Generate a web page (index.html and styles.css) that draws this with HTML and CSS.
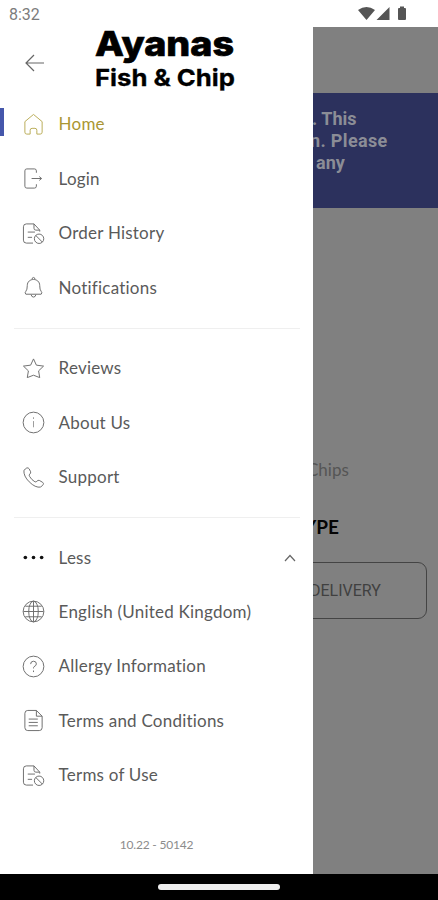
FILE: index.html
```html
<!DOCTYPE html>
<html lang="en">
<head>
<meta charset="utf-8">
<title>Ayanas Fish &amp; Chip</title>
<link rel="stylesheet" href="styles.css">
</head>
<body>
<svg width="0" height="0" class="defs">
  <symbol id="doc-ban" viewBox="0 0 24 24"><path d="M11.500 22H4.500Q1.500 22 1.500 19V5Q1.500 2 4.500 2H12.500L18.500 8.500V10M12.500 2V6.500Q12.500 8.500 14.500 8.500H18.500M6 10.500H13.500M6 16H10.500"/><circle cx="17.800" cy="17.500" r="4.900"/><path d="M14.300 14L21.300 21"/></symbol>
</svg>
<div class="phone">
  <header class="status">
    <span>8:32</span>
    <svg class="signals" width="50" height="16" viewBox="0 0 50 16"><path d="M0 4Q8.500-2 17 4L8.500 14ZM18.500 14L31.500 1V14ZM40 3Q40 2 41 2H42V.5H46V2H47Q48 2 48 3V13Q48 14 47 14H41Q40 14 40 13Z"/></svg>
  </header>
  <div class="stage">
    <aside class="drawer">
      <div class="brand">
        <svg class="back" width="20" height="18" viewBox="0 0 20 18"><path d="M9 1L1 9L9 17M1 9H19"/></svg>
        <svg class="logo" width="144" height="66" viewBox="0 0 144 66"><text class="logo-top" x="1" y="29" textLength="139" lengthAdjust="spacingAndGlyphs">Ayanas</text><text class="logo-sub" x="1" y="59" textLength="140" lengthAdjust="spacingAndGlyphs">Fish &amp; Chip</text></svg>
      </div>
      <nav>
        <ul class="group">
          <li class="row active"><svg class="icon" viewBox="0 0 24 24"><path d="M3 9L12 1.500L21 9V20Q21 22 19 22H15.500V18Q15.500 16 13.500 16H10.500Q8.500 16 8.500 18V22H5Q3 22 3 20Z"/></svg><span class="label">Home</span></li>
          <li class="row"><svg class="icon" viewBox="0 0 24 24"><path d="M15 6V4Q15 2 13 2H5Q3 2 3 4V20Q3 22 5 22H13Q15 22 15 20V18M10 12H20M18 10L20.500 12L18 14"/></svg><span class="label">Login</span></li>
          <li class="row"><svg class="icon"><use href="#doc-ban"/></svg><span class="label">Order History</span></li>
          <li class="row"><svg class="icon" viewBox="0 0 24 24"><path d="M10.500 3.500Q10.500 1.500 12 1.500T13.500 3.500M4 19Q2.500 17.500 4 16Q5.500 14.500 5.500 10C5.500 1.500 18.500 1.500 18.500 10Q18.500 14.500 20 16Q21.500 17.500 20 19ZM9.500 19.500Q10 22 12 22T14.500 19.500"/></svg><span class="label">Notifications</span></li>
        </ul>
        <ul class="group">
          <li class="row"><svg class="icon" viewBox="0 0 24 24"><path d="M12 2L15 8.500L22.500 9.500L17.300 14.500L18.500 21.500L12 19L5.500 21.500L6.700 14.500L1.500 9.500L9 8.500Z"/></svg><span class="label">Reviews</span></li>
          <li class="row"><svg class="icon" viewBox="0 0 24 24"><circle cx="12" cy="12" r="10.800"/><path class="faint" d="M12 10.500V17M12 6.500V8.300"/></svg><span class="label">About Us</span></li>
          <li class="row"><svg class="icon" viewBox="0 0 24 24"><path d="M2 4.500L5 2Q6.500 1.500 7.500 3L9 6Q9.500 7.500 8 8.500Q7 9.500 8 11Q10 14.500 13.500 16.500Q14.500 17 15.500 16Q16.500 14.500 18 15L21.500 17Q23 18 22 19.500L19.500 22Q14 23 7.500 16.500Q1.500 10.500 2 4.500Z"/></svg><span class="label">Support</span></li>
        </ul>
        <ul class="group">
          <li class="row"><svg class="icon" viewBox="0 0 24 24"><g class="dots"><circle cx="3.500" cy="12" r="1.900"/><circle cx="12" cy="12" r="1.900"/><circle cx="20.500" cy="12" r="1.900"/></g></svg><span class="label">Less</span><svg class="chevron" width="12" height="8" viewBox="0 0 12 8"><path d="M1 7L6 1.500L11 7"/></svg></li>
          <li class="row"><svg class="icon" viewBox="0 0 24 24"><circle cx="12" cy="12" r="10.800"/><ellipse cx="12" cy="12" rx="5" ry="10.800"/><path d="M12 1.500V22.500M1.500 12H22.500M3.500 6.500H20.500M3.500 17.500H20.500"/></svg><span class="label">English (United Kingdom)</span></li>
          <li class="row"><svg class="icon" viewBox="0 0 24 24"><circle cx="12" cy="12" r="10.800"/><path d="M9 9.500Q9 6.500 12 6.500T15 9.300Q15 11 12.500 12.300Q12 12.600 12 14M12 16.200V17.800"/></svg><span class="label">Allergy Information</span></li>
          <li class="row"><svg class="icon" viewBox="0 0 24 24"><path d="M6 1.500H15L21 7.500V19.500Q21 22.500 18 22.500H6Q3 22.500 3 19.500V4.500Q3 1.500 6 1.500ZM15 1.500V7.500H21M7 10.500H16.500M7 14H16.500M7 17.500H16.500"/></svg><span class="label">Terms and Conditions</span></li>
          <li class="row"><svg class="icon"><use href="#doc-ban"/></svg><span class="label">Terms of Use</span></li>
        </ul>
      </nav>
      <p class="version">10.22 - 50142</p>
    </aside>
    <main class="page">
      <div class="banner"><p class="line-one">. This</p><p class="line-two">n. Please</p><p class="line-three">any</p></div>
      <p class="food">Chips</p>
      <h2>YPE</h2>
      <div class="delivery">DELIVERY</div>
    </main>
  </div>
  <footer class="navbar"><span class="pill"></span></footer>
</div>
</body>
</html>
```
FILE: styles.css
```css
* { box-sizing: border-box; }
body, p, h2, ul { margin: 0; padding: 0; }
body { font-family: Lato, sans-serif; background: #fff; overflow: hidden; }
svg { fill: none; flex: none; }
.defs { display: block; }
.phone { width: 438px; height: 900px; display: flex; flex-direction: column; }
.status { height: 27px; flex: none; display: flex; justify-content: space-between; padding: 6px 30px 0 9px; font: 16px/17px Roboto, sans-serif; color: #7c7c7c; }
.signals { fill: #555; margin: 0 0 0 1px; }
.stage { flex: 1; display: flex; min-height: 0; }
.drawer { width: 313px; flex: none; display: flex; flex-direction: column; background: #fff; }
.brand { height: 70.300px; flex: none; display: flex; align-items: flex-start; padding-left: 25px; }
.back { margin-top: 27px; stroke: #666; stroke-width: 1.200; }
.logo { margin-left: 49px; overflow: visible; }
.logo text { fill: #000; stroke: #000; font-family: Inter, sans-serif; }
.logo-top { font-size: 34px; font-weight: 800; stroke-width: .7px; }
.logo-sub { font-size: 23.500px; font-weight: 700; stroke-width: .3px; }
.group { list-style: none; }
.group + .group { margin: 13px 0 0; padding-top: 13.200px; background: linear-gradient(#efefef, #efefef) 14px 0 / 286px 1px no-repeat; }
.row { height: 54.400px; display: flex; align-items: center; padding: 0 17px 0 22px; }
.active { background: linear-gradient(#4557ab, #4557ab) 0 40% / 4px 28px no-repeat; }
.icon { width: 23px; height: 23px; margin-right: 13.600px; stroke: #6c6c6c; stroke-width: 1; }
.active .icon { stroke: #b8aa54; }
.faint { stroke: #999; }
.dots { fill: #111; stroke: none; }
.label { font-size: 17px; line-height: 24px; color: #5a5a5a; white-space: nowrap; letter-spacing: .22px; }
.active .label { color: #aa9632; }
.chevron { margin-left: auto; stroke: #666; stroke-width: 1.200; }
.version { margin-top: 35px; text-align: center; font-size: 12px; line-height: 16px; color: #8c8c8c; letter-spacing: -.2px; }
.page { width: 125px; background: #808080; overflow: hidden; white-space: nowrap; }
.banner { height: 115px; margin-top: 66px; padding: 15px 0 0 1px; background: #2c315d; color: #8b8d96; font: 700 18px/22px Roboto, sans-serif; }
.line-one { margin-left: -2px; }
.line-two { margin-left: -4px; letter-spacing: .35px; }
.line-three { margin-left: 2px; }
.food { margin: 250px 0 0 -6px; font-size: 17px; line-height: 24px; color: #555; }
h2 { margin: 32px 0 0 -9px; font-size: 19px; line-height: 26px; color: #050505; }
.delivery { width: 135px; height: 57px; margin: 22px 0 0 -21px; padding-left: 17px; border: 1px solid #444; border-radius: 9px; font: 16px/56px Roboto, sans-serif; color: #404040; }
.navbar { height: 26px; flex: none; display: flex; justify-content: center; padding-top: 10px; background: #000; }
.pill { width: 122px; height: 6px; border-radius: 3px; background: #eee; }
```
